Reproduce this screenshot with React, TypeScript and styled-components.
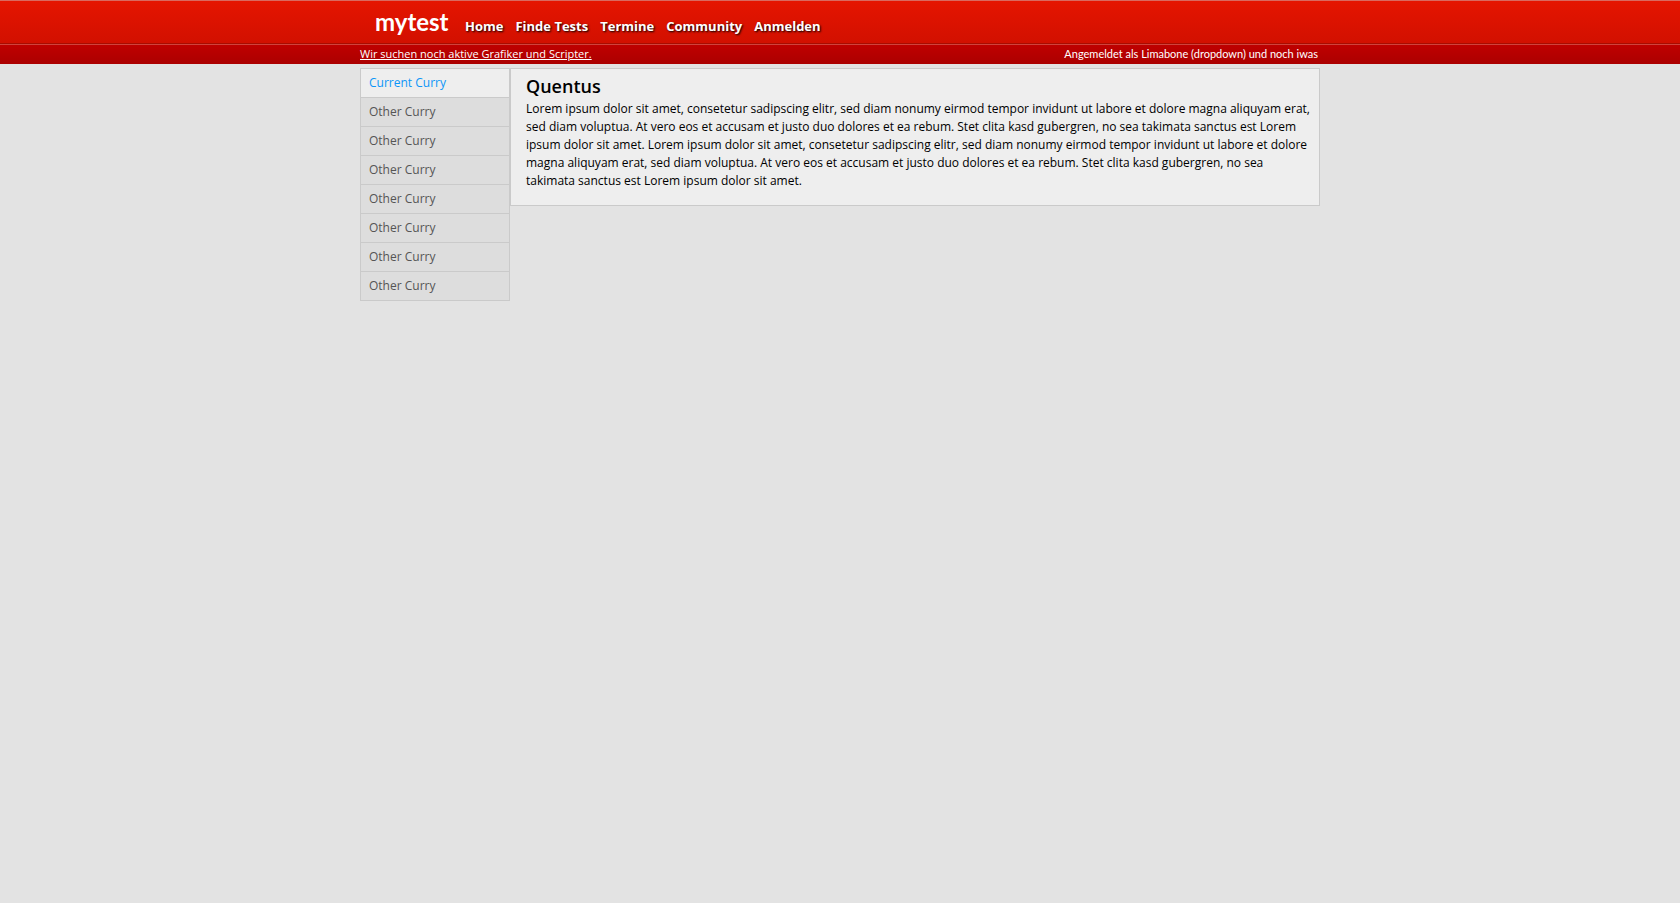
import React from "react";
import styled, { createGlobalStyle } from "styled-components";

const GlobalStyle = createGlobalStyle`
  * { box-sizing: border-box; }
  body {
    margin: 0;
    background: #e3e3e3;
    color: #000;
    font: 12px/18px "Open Sans", sans-serif;
  }
`;

const Header = styled.header`
  border-top: 1px solid #d9695f;
  background: linear-gradient(#e51500, #d21000 42px);
`;

const Wrap = styled.div`
  display: flex;
  width: 100%;
  max-width: 960px;
  margin: 0 auto;
`;

const HeaderRow = styled(Wrap)`
  height: 42px;
  padding-left: 15px;
  align-items: baseline;
`;

const Logo = styled.a`
  width: 90px;
  color: #fff;
  font: 700 24px/42px Lato, sans-serif;
  text-decoration: none;
`;

const Nav = styled.nav`
  display: flex;
  gap: 12px;
`;

const NavLink = styled.a`
  color: #fff;
  font-size: 13px;
  font-weight: 700;
  text-decoration: none;
  text-shadow: 1px 1px 2px #000;
`;

const SubBar = styled.div`
  border-top: 1px solid #a80c00;
  background: linear-gradient(#c00000, #ab0000);
  box-shadow: inset 0 1px #d0433c;
`;

const SubRow = styled(Wrap)`
  height: 20px;
  justify-content: space-between;
  align-items: center;
  padding-right: 2px;
  color: #fff;
  font-size: 11px;
`;

const Notice = styled.a`
  color: inherit;
`;

const Account = styled.span`
  font-family: Lato, sans-serif;
`;

const Body = styled(Wrap)`
  margin-top: 4px;
  align-items: flex-start;
`;

const Sidebar = styled.nav`
  flex: 0 0 150px;
  border: 1px solid #cacaca;
`;

const SideLink = styled.a<{ $current?: boolean }>`
  display: block;
  height: 29px;
  padding-left: 8px;
  border-bottom: 1px solid #cacaca;
  background: ${(p) => (p.$current ? "#eee" : "#ddd")};
  color: ${(p) => (p.$current ? "#0c96f8" : "#555")};
  line-height: 28px;
  text-decoration: none;

  &:last-child {
    height: 28px;
    border-bottom: 0;
  }
`;

const Content = styled.main`
  flex: 1;
  min-width: 0;
  padding: 6px 5px 15px 15px;
  border: 1px solid #cacaca;
  background: #eee;
`;

const Title = styled.h1`
  margin: 0 0 3px;
  font-size: 18px;
  font-weight: 600;
  line-height: 22px;
`;

const Text = styled.p`
  margin: 0;
`;

const navItems = ["Home", "Finde Tests", "Termine", "Community", "Anmelden"];
const curries = ["Current Curry", ...Array<string>(7).fill("Other Curry")];

export default function App() {
  return (
    <>
      <GlobalStyle />
      <Header>
        <HeaderRow>
          <Logo href="#">mytest</Logo>
          <Nav>
            {navItems.map((item) => (
              <NavLink key={item} href="#">{item}</NavLink>
            ))}
          </Nav>
        </HeaderRow>
        <SubBar>
          <SubRow>
            <Notice href="#">Wir suchen noch aktive Grafiker und Scripter.</Notice>
            <Account>Angemeldet als Limabone (dropdown) und noch iwas</Account>
          </SubRow>
        </SubBar>
      </Header>
      <Body>
        <Sidebar>
          {curries.map((label, i) => (
            <SideLink key={i} href="#" $current={i === 0}>{label}</SideLink>
          ))}
        </Sidebar>
        <Content>
          <Title>Quentus</Title>
          <Text>
            Lorem ipsum dolor sit amet, consetetur sadipscing elitr, sed diam nonumy eirmod tempor
            invidunt ut labore et dolore magna aliquyam erat, sed diam voluptua. At vero eos et
            accusam et justo duo dolores et ea rebum. Stet clita kasd gubergren, no sea takimata
            sanctus est Lorem ipsum dolor sit amet. Lorem ipsum dolor sit amet, consetetur
            sadipscing elitr, sed diam nonumy eirmod tempor invidunt ut labore et dolore magna
            aliquyam erat, sed diam voluptua. At vero eos et accusam et justo duo dolores et ea
            rebum. Stet clita kasd gubergren, no sea takimata sanctus est Lorem ipsum dolor sit
            amet.
          </Text>
        </Content>
      </Body>
    </>
  );
}
